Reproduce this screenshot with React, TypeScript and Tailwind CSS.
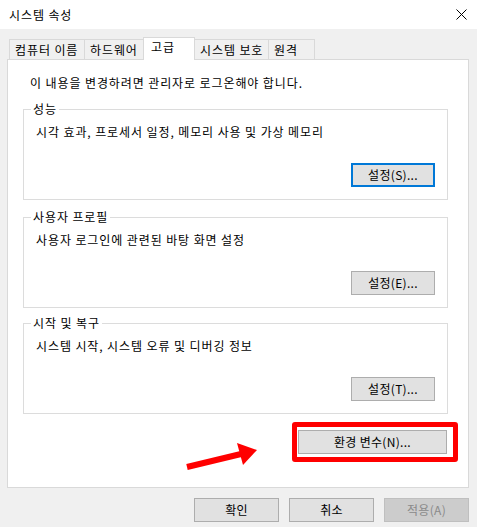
import React from "react";

const Btn = ({
  label,
  className = "",
}: {
  label: string;
  className?: string;
}) => (
  <div
    className={`h-[24px] flex items-center justify-center text-[12px] leading-[16px] tracking-[0.3px] ${className}`}
  >
    {label}
  </div>
);

const Group = ({
  title,
  desc,
  btn,
  focused,
  className = "",
}: {
  title: string;
  desc: string;
  btn: string;
  focused?: boolean;
  className?: string;
}) => (
  <div
    className={`relative w-[425px] h-[91px] border border-[#dcdcdc] flex flex-col ${className}`}
  >
    <span className="absolute left-[7px] top-[-9px] bg-white px-[2px] text-[12px] leading-[16px]">
      {title}
    </span>
    <div className="pl-[12px] pt-[14px] text-[12px] leading-[16px]">{desc}</div>
    <div className="flex justify-end pr-[12px] mt-[23px]">
      <Btn
        label={btn}
        className={`w-[84px] bg-[#e1e1e1] ${
          focused ? "border-2 border-[#0078d7]" : "border border-[#adadad]"
        }`}
      />
    </div>
  </div>
);

export default function App() {
  const tabs = [
    { t: "컴퓨터 이름", w: "w-[76px]", ml: "" },
    { t: "하드웨어", w: "w-[61px]", ml: "-ml-px" },
    { t: "고급", w: "w-[52px]", ml: "ml-[-2px]", sel: true },
    { t: "시스템 보호", w: "w-[75px]", ml: "-ml-px" },
    { t: "원격", w: "w-[47px]", ml: "-ml-px" },
  ];
  return (
    <div className="relative w-[477px] h-[527px] overflow-hidden bg-[#f0f0f0] text-black tracking-[0.9px] font-['Noto_Sans_CJK_KR','Noto_Sans',sans-serif]">
      {/* title bar */}
      <div className="h-[29px] bg-white flex items-center justify-between pl-[9px] pr-[9px]">
        <span className="text-[12px] leading-[16px]">시스템 속성</span>
        <svg width="11" height="11" viewBox="0 0 11 11" className="mr-[1px]">
          <path d="M0.5 0.5 L10.5 10.5 M10.5 0.5 L0.5 10.5" stroke="#000" strokeWidth="1" />
        </svg>
      </div>

      <div className="pl-[7px] pr-[8px] pt-[8px]">
        {/* tabs */}
        <div className="flex items-end h-[22px] ml-[2px] relative z-10">
          {tabs.map((tb) =>
            tb.sel ? (
              <div
                key={tb.t}
                className={`${tb.w} ${tb.ml} h-[23px] mb-[-1px] bg-white border border-b-0 border-[#d9d9d9] pl-[7px] pt-[1px] text-[12px] leading-[16px] relative z-10`}
              >
                {tb.t}
              </div>
            ) : (
              <div
                key={tb.t}
                className={`${tb.w} ${tb.ml} h-[20px] bg-[#f0f0f0] border border-b-0 border-[#d9d9d9] pl-[5px] flex items-center text-[12px] leading-[16px] whitespace-nowrap`}
              >
                {tb.t}
              </div>
            )
          )}
        </div>

        {/* panel */}
        <div className="h-[429px] bg-white border border-[#d9d9d9] pl-[15px] pt-[15px]">
          <div className="pl-[7px] text-[12px] leading-[16px]">
            이 내용을 변경하려면 관리자로 로그온해야 합니다.
          </div>
          <Group
            className="mt-[18px]"
            title="성능"
            desc="시각 효과, 프로세서 일정, 메모리 사용 및 가상 메모리"
            btn="설정(S)..."
            focused
          />
          <Group
            className="mt-[17px]"
            title="사용자 프로필"
            desc="사용자 로그인에 관련된 바탕 화면 설정"
            btn="설정(E)..."
          />
          <Group
            className="mt-[15px]"
            title="시작 및 복구"
            desc="시스템 시작, 시스템 오류 및 디버깅 정보"
            btn="설정(T)..."
          />
          <div className="w-[425px] flex justify-end mt-[16px] pr-[1px]">
            <Btn
              label="환경 변수(N)..."
              className="w-[149px] bg-[#e1e1e1] border border-[#adadad]"
            />
          </div>
        </div>

        {/* bottom buttons */}
        <div className="flex justify-end gap-[10px] mt-[10px]">
          <Btn label="확인" className="w-[85px] bg-[#e1e1e1] border border-[#adadad]" />
          <Btn label="취소" className="w-[85px] bg-[#e1e1e1] border border-[#adadad]" />
          <Btn
            label="적용(A)"
            className="w-[85px] bg-[#cccccc] border border-[#bfbfbf] text-[#8a8a8a]"
          />
        </div>
      </div>

      {/* annotation: red box */}
      <div className="absolute left-[292px] top-[422px] w-[166px] h-[40px] border-[5px] border-[#ff0000] rounded-[3px]" />
      {/* annotation: arrow */}
      <svg
        className="absolute left-[180px] top-[436px]"
        width="85"
        height="36"
        viewBox="0 0 85 36"
      >
        <line x1="7" y1="31" x2="61" y2="18" stroke="#ff0000" strokeWidth="6" />
        <polygon points="57,7 77,14 63,29" fill="#ff0000" />
      </svg>
    </div>
  );
}
